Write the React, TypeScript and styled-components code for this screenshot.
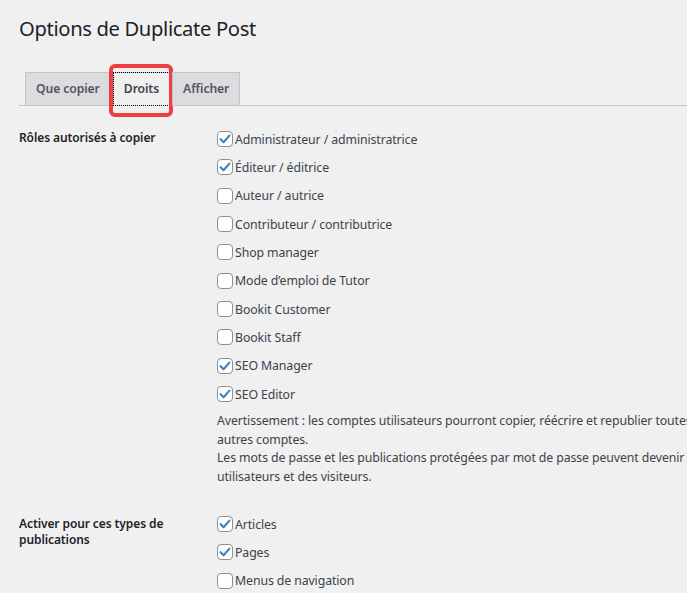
import React from 'react';
import styled, { createGlobalStyle } from 'styled-components';

const GlobalStyle = createGlobalStyle`
  html, body {
    margin: 0;
    padding: 0;
    background: #f0f0f1;
    overflow: hidden;
  }
  body {
    font-family: "Noto Sans", "Open Sans", sans-serif;
    font-size: 12px;
    letter-spacing: -0.1px;
    color: #3c434a;
    -webkit-font-smoothing: antialiased;
  }
`;

const Wrap = styled.div`
  padding: 13px 0 0 19px;
  width: 900px;
`;

const Title = styled.h1`
  margin: 0;
  font-size: 20.2px;
  font-weight: 400;
  letter-spacing: -0.35px;
  line-height: 30px;
  color: #1d2327;
`;

const TabBar = styled.nav`
  margin-top: 29px;
  display: flex;
  align-items: flex-end;
  gap: 2px;
  padding-left: 6px;
  border-bottom: 1px solid #c3c4c7;
`;

const Tab = styled.a<{ $active?: boolean }>`
  position: relative;
  display: block;
  padding: 4px 10px;
  margin-bottom: -1px;
  font-size: 12.2px;
  font-weight: 600;
  line-height: 24px;
  color: ${({ $active }) => ($active ? '#3c434a' : '#50575e')};
  background: ${({ $active }) => ($active ? '#f0f0f1' : '#dcdcde')};
  border: 1px solid #c3c4c7;
  border-bottom-color: ${({ $active }) => ($active ? '#f0f0f1' : '#c3c4c7')};
  text-decoration: none;
  outline: ${({ $active }) => ($active ? '1px dotted #000' : 'none')};
  outline-offset: -1px;
`;

const Highlight = styled.span`
  position: absolute;
  top: -9px;
  left: -5px;
  right: -4px;
  bottom: -12px;
  border: 4px solid #ef3e42;
  border-radius: 6px;
  pointer-events: none;
`;

const Row = styled.div<{ $pad: number }>`
  display: grid;
  grid-template-columns: 188px 1fr;
  column-gap: 10px;
  padding-top: ${({ $pad }) => $pad}px;
  padding-bottom: 12px;
`;

const RowLabel = styled.div<{ $offset: number }>`
  margin-top: ${({ $offset }) => $offset}px;
  font-weight: 600;
  line-height: 16.5px;
  color: #1d2327;
`;

const Options = styled.div`
  display: flex;
  flex-direction: column;
`;

const Option = styled.label`
  display: flex;
  align-items: center;
  gap: 1px;
  height: 28.33px;
  font-size: 12.3px;
  color: #3c434a;
`;

const Box = styled.span`
  box-sizing: border-box;
  width: 16px;
  height: 16px;
  margin-right: 1px;
  border: 1px solid #8c8f94;
  border-radius: 4px;
  background: #fff;
  display: flex;
  align-items: center;
  justify-content: center;
  flex-shrink: 0;
`;

const Description = styled.p`
  margin: 4px 0 0;
  font-size: 12.3px;
  line-height: 18.4px;
  color: #3c434a;
  white-space: nowrap;
  span {
    display: block;
  }
`;

const Check = () => (
  <svg width="14" height="14" viewBox="0 0 14 14">
    <path d="M2.6 7.2 L5.6 10.2 L11.4 3.6" fill="none" stroke="#3582c4" strokeWidth="2.1" strokeLinecap="round" strokeLinejoin="round" />
  </svg>
);

const CheckOption = ({ label, checked }: { label: string; checked?: boolean }) => (
  <Option>
    <Box>{checked && <Check />}</Box>
    {label}
  </Option>
);

const roles = [
  { label: 'Administrateur / administratrice', checked: true },
  { label: 'Éditeur / éditrice', checked: true },
  { label: 'Auteur / autrice' },
  { label: 'Contributeur / contributrice' },
  { label: 'Shop manager' },
  { label: 'Mode d’emploi de Tutor' },
  { label: 'Bookit Customer' },
  { label: 'Bookit Staff' },
  { label: 'SEO Manager', checked: true },
  { label: 'SEO Editor', checked: true },
];

const types = [
  { label: 'Articles', checked: true },
  { label: 'Pages', checked: true },
  { label: 'Menus de navigation' },
];

export default function App() {
  return (
    <>
      <GlobalStyle />
      <Wrap>
        <Title>Options de Duplicate Post</Title>
        <TabBar>
          <Tab href="#">Que copier</Tab>
          <Tab href="#" $active>
            Droits
            <Highlight />
          </Tab>
          <Tab href="#">Afficher</Tab>
        </TabBar>

        <Row $pad={19}>
          <RowLabel $offset={5}>Rôles autorisés à copier</RowLabel>
          <div>
            <Options>
              {roles.map((r) => (
                <CheckOption key={r.label} {...r} />
              ))}
            </Options>
            <Description>
              <span>Avertissement : les comptes utilisateurs pourront copier, réécrire et republier toutes les publications, même celles des</span>
              <span>autres comptes.</span>
              <span>Les mots de passe et les publications protégées par mot de passe peuvent devenir visibles aux yeux d’autres</span>
              <span>utilisateurs et des visiteurs.</span>
            </Description>
          </div>
        </Row>

        <Row $pad={12}>
          <RowLabel $offset={6}>Activer pour ces types de publications</RowLabel>
          <Options>
            {types.map((t) => (
              <CheckOption key={t.label} {...t} />
            ))}
          </Options>
        </Row>
      </Wrap>
    </>
  );
}
